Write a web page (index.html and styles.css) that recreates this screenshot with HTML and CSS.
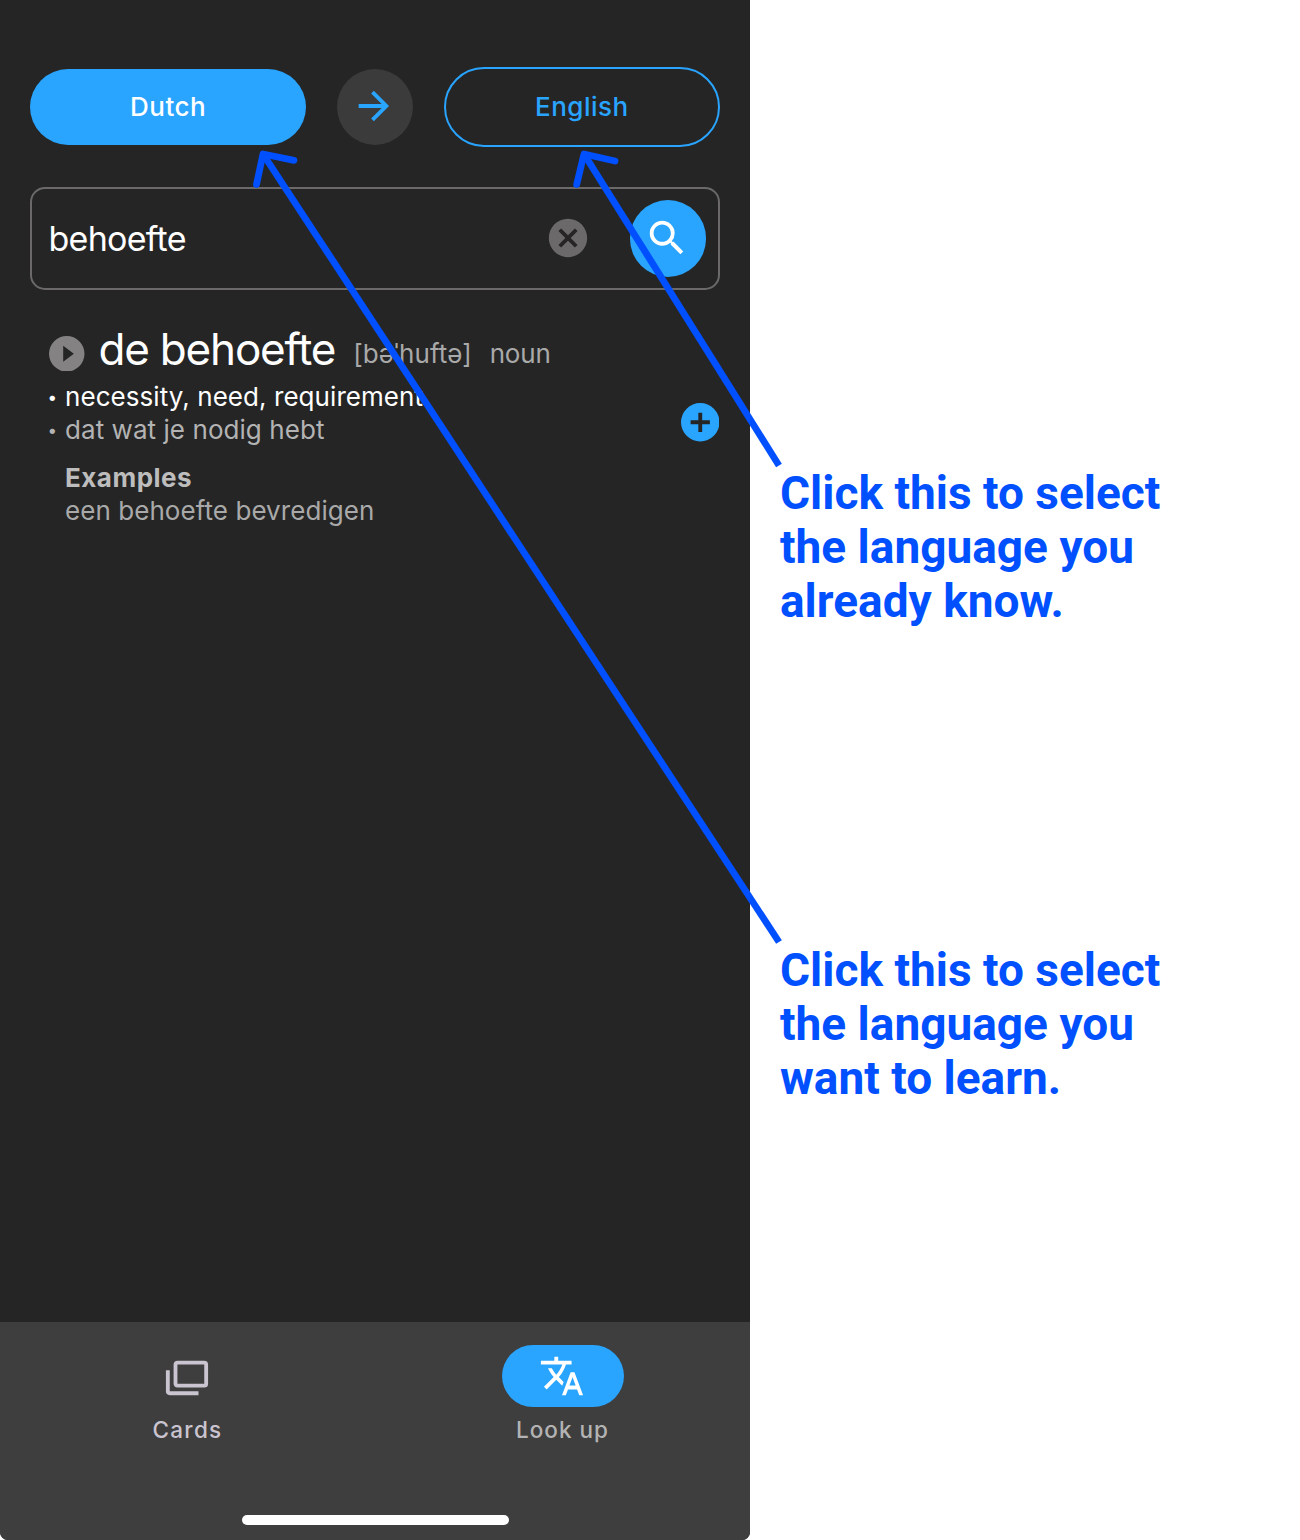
FILE: index.html
```html
<!DOCTYPE html>
<html lang="en">
<head>
<meta charset="utf-8">
<title>Look up</title>
<link rel="stylesheet" href="styles.css">
</head>
<body>
<div class="guide">
  <main class="phone">
    <header class="languages">
      <button class="language language-from">Dutch</button>
      <button class="swap" aria-label="Swap languages"><svg class="icon" viewBox="0 0 24 24"><path d="M4,11V13H16L10.5,18.5L11.92,19.92L19.84,12L11.92,4.08L10.5,5.5L16,11H4Z"/></svg></button>
      <button class="language language-to">English</button>
    </header>
    <section class="search">
      <span class="query">behoefte</span>
      <svg class="icon clear" viewBox="0 0 24 24"><path d="M12,2C17.53,2 22,6.47 22,12C22,17.53 17.53,22 12,22C6.47,22 2,17.53 2,12C2,6.47 6.47,2 12,2M15.59,7L12,10.59L8.41,7L7,8.41L10.59,12L7,15.59L8.41,17L12,13.41L15.59,17L17,15.59L13.41,12L17,8.41L15.59,7Z"/></svg>
      <button class="submit" aria-label="Search"><svg class="icon" viewBox="0 0 24 24"><path d="M15.5 14h-.79l-.28-.27A6.471 6.471 0 0 0 16 9.5 6.5 6.5 0 1 0 9.5 16c1.61 0 3.09-.59 4.23-1.57l.27.28v.79l5 4.99L20.49 19l-4.99-5zm-6 0C7.01 14 5 11.99 5 9.5S7.01 5 9.5 5 14 7.01 14 9.5 11.99 14 9.5 14z"/></svg></button>
    </section>
    <article class="entry">
      <div class="headword">
        <svg class="play" viewBox="2 2 20 20"><path d="M10,16.5V7.5L16,12M12,2A10,10 0 0,0 2,12A10,10 0 0,0 12,22A10,10 0 0,0 22,12A10,10 0 0,0 12,2Z"/></svg>
        <h1 class="word">de behoefte</h1>
        <span class="ipa">[bəˈhuftə]</span>
        <span class="pos">noun</span>
      </div>
      <div class="details">
        <div class="senses">
          <p class="sense translation">necessity, need, requirement</p>
          <p class="sense definition">dat wat je nodig hebt</p>
          <h2 class="examples-title">Examples</h2>
          <p class="example">een behoefte bevredigen</p>
        </div>
        <svg class="add" viewBox="2 2 20 20"><path d="M17,13H13V17H11V13H7V11H11V7H13V11H17M12,2A10,10 0 0,0 2,12A10,10 0 0,0 12,22A10,10 0 0,0 22,12A10,10 0 0,0 12,2Z"/></svg>
      </div>
    </article>
    <nav class="tabs">
      <div class="tab-row">
        <div class="tab">
          <span class="tab-icon"><svg class="icon" viewBox="0 0 24 24"><path d="M21,16V6H7V16H21M21,4A2,2 0 0,1 23,6V16A2,2 0 0,1 21,18H7C5.89,18 5,17.1 5,16V6C5,4.89 5.89,4 7,4H21M3,20H18V22H3A2,2 0 0,1 1,20V9H3V20Z"/></svg></span>
          <span class="tab-label">Cards</span>
        </div>
        <div class="tab tab-active">
          <span class="tab-icon"><svg class="icon" viewBox="0 0 24 24"><path d="M12.87,15.07L10.33,12.56L10.36,12.53C12.1,10.59 13.34,8.36 14.07,6H17V4H10V2H8V4H1V6H12.17C11.5,7.92 10.44,9.75 9,11.35C8.07,10.32 7.3,9.19 6.69,8H4.69C5.42,9.63 6.42,11.17 7.67,12.56L2.58,17.58L4,19L9,14L12.11,17.11L12.87,15.07M18.5,10H16.5L12,22H14L15.12,19H19.87L21,22H23L18.5,10M15.88,17L17.5,12.67L19.12,17H15.88Z"/></svg></span>
          <span class="tab-label">Look up</span>
        </div>
      </div>
      <div class="home-indicator"></div>
    </nav>
  </main>
  <aside class="notes">
    <p class="note">Click this to select<br>the language you<br>already know.</p>
    <p class="note">Click this to select<br>the language you<br>want to learn.</p>
  </aside>
  <svg class="arrows" viewBox="0 0 1300 1540">
    <path d="M779 465.5L584 154"/>
    <path class="head" d="M576.7 184.5L584 154L615 161"/>
    <path d="M779 942L263 154"/>
    <path class="head" d="M256.5 184.5L263 154L294 160.3"/>
  </svg>
</div>
</body>
</html>
```

FILE: styles.css
```css
* { box-sizing: border-box; margin: 0; padding: 0; }
body { background: #fff; font-family: Inter, "Liberation Sans", sans-serif; font-feature-settings: "calt" 0, "liga" 0; }
button { border: 0; background: none; font: inherit; color: inherit; }

.guide { position: relative; display: flex; width: 1300px; height: 1540px; }
.phone {
  display: flex; flex-direction: column;
  width: 750px; height: 1540px;
  background: #252525; color: #fff;
  border-radius: 0 0 8px 8px; overflow: hidden;
}
.icon { display: block; width: 46px; height: 46px; fill: currentColor; }

.languages {
  display: flex; align-items: center; justify-content: space-between;
  padding: 67px 30.4px 0;
}
.language {
  width: 275.5px; height: 76.5px; padding-bottom: 1px; border-radius: 40px;
  font-size: 26px; font-weight: 500; letter-spacing: 0.5px;
}
.language-from { background: #29a4ff; }
.language-to { height: 80px; border: 2px solid #29a4ff; color: #29a4ff; }
.swap {
  display: flex; align-items: center; justify-content: center;
  width: 76.5px; height: 76.5px; padding: 0 2px 2px 0;
  border-radius: 50%; background: #3b3b3b; color: #29a4ff;
}

.search {
  display: flex; align-items: center;
  height: 103px; margin: 40px 30.4px 0; padding: 0 11.5px 0 16px;
  border: 2px solid #6b696a; border-radius: 15px;
}
.query { flex: 1; font-size: 34px; letter-spacing: -0.7px; }
.clear { margin: 0 38.5px 2px 0; color: #6b696a; }
.submit {
  display: flex; align-items: center; justify-content: center;
  width: 76.5px; height: 76.5px; padding: 0 1px 1px 0;
  border-radius: 50%; background: #29a4ff;
}

.entry { flex: 1; padding: 32px 31px 0 49px; }
.headword { display: flex; align-items: flex-start; height: 59px; }
.play { width: 35.5px; height: 35.5px; margin: 13.5px 14px 0 0; fill: #858283; }
.word { font-size: 44px; line-height: 54px; font-weight: 400; letter-spacing: -1.2px; }
.ipa, .pos { margin-left: 17.8px; font-size: 26px; line-height: 63px; color: #a9a9a9; letter-spacing: 0.15px; }
.pos { letter-spacing: -0.2px; }
.details { display: flex; justify-content: space-between; font-size: 26px; line-height: 32.5px; }
.senses { padding-left: 16px; color: #b3b3b3; letter-spacing: 0.06px; }
.sense::before { content: "•"; float: left; margin-left: -17.5px; width: 16px; font-size: 17px; }
.translation { color: #fff; }
.examples-title { margin-top: 16px; font-size: 26px; font-weight: 700; color: #bdbdbd; letter-spacing: 0.5px; }
.example { color: #a9a9a9; }
.add { width: 38.5px; height: 38.5px; margin-top: 22px; fill: #29a4ff; }

.tabs {
  display: flex; flex-direction: column; align-items: center; justify-content: space-between;
  height: 217.6px; padding: 22.6px 0 15px; background: #3e3e3e;
}
.tab-row { display: flex; width: 100%; }
.tab { flex: 1; display: flex; flex-direction: column; align-items: center; gap: 9px; color: #cac4d0; }
.tab-icon { display: flex; align-items: center; justify-content: center; width: 122px; height: 61.5px; padding: 0.5px 1px 0 0; border-radius: 31px; }
.tab-active .tab-icon { background: #29a4ff; color: #fff; }
.tab-active .tab-label { color: #b3b3b3; letter-spacing: 1px; }
.tab-label { font-size: 22.5px; line-height: 28px; font-weight: 500; letter-spacing: 1.3px; }
.home-indicator { width: 267px; height: 10px; border-radius: 5px; background: #fff; }

.notes { display: flex; flex-direction: column; gap: 315px; padding: 466px 0 0 30px; }
.note { font-family: Roboto, "Liberation Sans", sans-serif; font-size: 46px; line-height: 54px; font-weight: 700; color: #0050ff; }

.arrows { position: absolute; left: 0; top: 0; width: 1300px; height: 1540px; fill: none; stroke: #0050ff; stroke-width: 6.8; pointer-events: none; }
.head { stroke-linecap: round; stroke-linejoin: round; }
```
